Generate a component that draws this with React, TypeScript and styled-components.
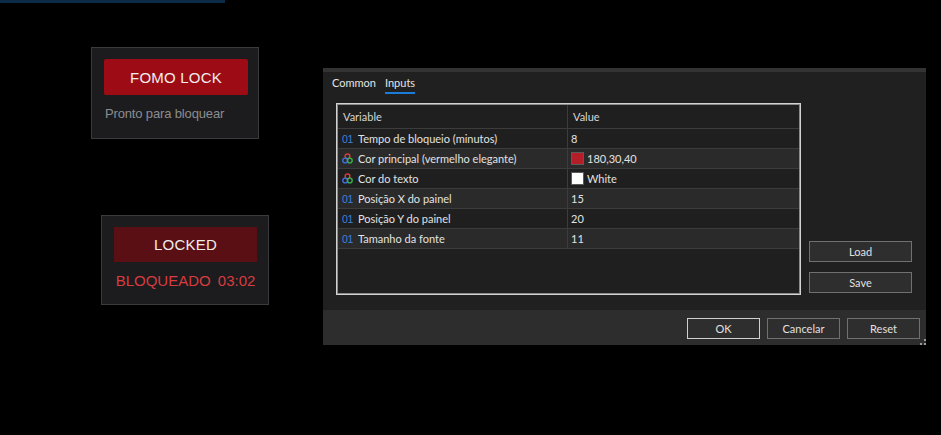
import * as React from 'react'
import styled, { createGlobalStyle } from 'styled-components'

const GlobalStyle = createGlobalStyle`
  html, body {
    margin: 0;
    padding: 0;
    background: #000;
  }
  body {
    width: 941px;
    height: 435px;
    overflow: hidden;
    font-family: "Liberation Sans", Arial, sans-serif;
  }
`

const TopBar = styled.div`
  width: 225px;
  height: 3px;
  background: #0b2b47;
`

const Stage = styled.div`
  display: flex;
  align-items: flex-start;
`

const LeftColumn = styled.div`
  width: 232px;
  padding-left: 91px;
  display: flex;
  flex-direction: column;
  align-items: flex-start;
`

const Panel = styled.div<{ $shift?: number; $top: number; $h: number }>`
  box-sizing: border-box;
  width: 168px;
  height: ${(p) => p.$h}px;
  margin-top: ${(p) => p.$top}px;
  margin-left: ${(p) => p.$shift || 0}px;
  padding: 11px 11px 0 12px;
  background: #1c1c1e;
  border: 1px solid #3b3b3d;
  display: flex;
  flex-direction: column;
`

const LockButton = styled.div<{ $locked?: boolean }>`
  height: ${(p) => (p.$locked ? 35 : 36)}px;
  width: ${(p) => (p.$locked ? 143 : 144)}px;
  display: flex;
  align-items: center;
  justify-content: center;
  background: ${(p) => (p.$locked ? '#5a0f14' : '#9d0c15')};
  border-radius: ${(p) => (p.$locked ? 0 : 2)}px;
  color: #eeeeee;
  font-size: 15px;
  letter-spacing: 0.2px;
`

const StatusText = styled.div<{ $alert?: boolean }>`
  margin-top: ${(p) => (p.$alert ? 10 : 11)}px;
  padding-left: ${(p) => (p.$alert ? 0 : 1)}px;
  width: ${(p) => (p.$alert ? '143px' : 'auto')};
  text-align: ${(p) => (p.$alert ? 'center' : 'left')};
  color: ${(p) => (p.$alert ? '#d83b40' : '#8c8c8e')};
  font-size: ${(p) => (p.$alert ? 15 : 13)}px;
  letter-spacing: ${(p) => (p.$alert ? 0 : -0.15)}px;
  word-spacing: ${(p) => (p.$alert ? 3 : 0)}px;
`

/* settings dialog */

const Dialog = styled.div`
  margin-top: 65px;
  width: 603px;
  height: 277px;
  display: flex;
  flex-direction: column;
  background: #202020;
  border-top: 4px solid #333333;
  box-sizing: border-box;
  font-family: Lato, "Open Sans", sans-serif;
  font-size: 11px;
  color: #dcdcdc;
`

const Tabs = styled.div`
  display: flex;
  gap: 9px;
  padding: 3px 0 0 9px;
  height: 31px;
  box-sizing: border-box;
`

const Tab = styled.div<{ $active?: boolean }>`
  height: 17px;
  line-height: 16px;
  color: #e4e4e4;
  border-bottom: 2px solid ${(p) => (p.$active ? '#1b7bd6' : 'transparent')};
`

const Body = styled.div`
  display: flex;
  gap: 8px;
  padding-left: 13px;
  height: 192px;
`

const Grid = styled.div`
  box-sizing: border-box;
  width: 465px;
  height: 192px;
  border: 1px solid #d2d2d2;
  box-shadow: inset 0 0 0 1px #8a8a8a;
  padding: 1px;
  background: #1f1f1f;
`

const Row = styled.div<{ $head?: boolean; $alt?: boolean }>`
  display: grid;
  grid-template-columns: 229px 1fr;
  height: ${(p) => (p.$head ? 24 : 20)}px;
  background: ${(p) => (p.$alt ? '#2a2a2a' : '#1f1f1f')};
  border-bottom: 1px solid #3c3c3c;
  box-sizing: border-box;
`

const Cell = styled.div<{ $value?: boolean }>`
  display: flex;
  align-items: center;
  gap: 5px;
  padding-left: ${(p) => (p.$value ? 3 : 4)}px;
  border-left: ${(p) => (p.$value ? '1px solid #3c3c3c' : 'none')};
  white-space: nowrap;
  color: #e2e2e2;
`

const HeadCell = styled(Cell)`
  padding-left: 5px;
  color: #d6d6d6;
`

const IntIcon = styled.span`
  width: 11px;
  font-family: "Liberation Sans", sans-serif;
  font-size: 10.5px;
  color: #3a82dc;
  letter-spacing: -0.3px;
`

const Swatch = styled.span<{ $color: string }>`
  width: 11px;
  height: 11px;
  background: ${(p) => p.$color};
  border: 1px solid #5a5a5a;
  margin-right: -2px;
`

const SideButtons = styled.div`
  display: flex;
  flex-direction: column;
  justify-content: flex-end;
  gap: 10px;
  padding-bottom: 2px;
`

const Button = styled.div<{ $primary?: boolean; $w: number }>`
  box-sizing: border-box;
  width: ${(p) => p.$w}px;
  height: 21px;
  display: flex;
  align-items: center;
  justify-content: center;
  background: #2e2e2e;
  border: 1px solid ${(p) => (p.$primary ? '#d0d0d0' : '#707070')};
  color: #e0e0e0;
`

const Footer = styled.div`
  margin-top: auto;
  height: 35px;
  background: #2d2d2d;
  display: flex;
  justify-content: flex-end;
  align-items: flex-start;
  gap: 7px;
  padding: 8px 6px 0 0;
  box-sizing: border-box;
  position: relative;
`

const Grip = styled.svg`
  position: absolute;
  right: 0;
  bottom: 0;
`

const ColorIcon = () => (
  <svg width="11" height="11" viewBox="0 0 11 11">
    <circle cx="5.5" cy="3.3" r="2.4" fill="none" stroke="#e0413c" strokeWidth="1.4" />
    <circle cx="3.2" cy="7.5" r="2.4" fill="none" stroke="#3c6fe0" strokeWidth="1.4" />
    <circle cx="7.8" cy="7.5" r="2.4" fill="none" stroke="#35b04a" strokeWidth="1.4" />
  </svg>
)

type Input = { name: string; kind: 'int' | 'color'; value: string; swatch?: string }

const inputs: Input[] = [
  { name: 'Tempo de bloqueio (minutos)', kind: 'int', value: '8' },
  { name: 'Cor principal (vermelho elegante)', kind: 'color', value: '180,30,40', swatch: '#b41e28' },
  { name: 'Cor do texto', kind: 'color', value: 'White', swatch: '#ffffff' },
  { name: 'Posição X do painel', kind: 'int', value: '15' },
  { name: 'Posição Y do painel', kind: 'int', value: '20' },
  { name: 'Tamanho da fonte', kind: 'int', value: '11' },
]

export default function App() {
  return (
    <>
      <GlobalStyle />
      <TopBar />
      <Stage>
        <LeftColumn>
          <Panel $top={44} $h={92}>
            <LockButton>FOMO LOCK</LockButton>
            <StatusText>Pronto para bloquear</StatusText>
          </Panel>
          <Panel $top={76} $shift={10} $h={90}>
            <LockButton $locked>LOCKED</LockButton>
            <StatusText $alert>BLOQUEADO 03:02</StatusText>
          </Panel>
        </LeftColumn>

        <Dialog>
          <Tabs>
            <Tab>Common</Tab>
            <Tab $active>Inputs</Tab>
          </Tabs>
          <Body>
            <Grid>
              <Row $head>
                <HeadCell>Variable</HeadCell>
                <HeadCell $value>Value</HeadCell>
              </Row>
              {inputs.map((it, i) => (
                <Row key={it.name} $alt={i % 2 === 1}>
                  <Cell>
                    {it.kind === 'int' ? <IntIcon>01</IntIcon> : <ColorIcon />}
                    {it.name}
                  </Cell>
                  <Cell $value>
                    {it.swatch && <Swatch $color={it.swatch} />}
                    {it.value}
                  </Cell>
                </Row>
              ))}
            </Grid>
            <SideButtons>
              <Button $w={103}>Load</Button>
              <Button $w={103}>Save</Button>
            </SideButtons>
          </Body>
          <Footer>
            <Button $primary $w={73}>OK</Button>
            <Button $w={73}>Cancelar</Button>
            <Button $w={73}>Reset</Button>
            <Grip width="7" height="7" viewBox="0 0 7 7">
              <rect x="5" y="1" width="2" height="2" fill="#9a9a9a" />
              <rect x="1" y="5" width="2" height="2" fill="#9a9a9a" />
              <rect x="5" y="5" width="2" height="2" fill="#9a9a9a" />
            </Grip>
          </Footer>
        </Dialog>
      </Stage>
    </>
  )
}
